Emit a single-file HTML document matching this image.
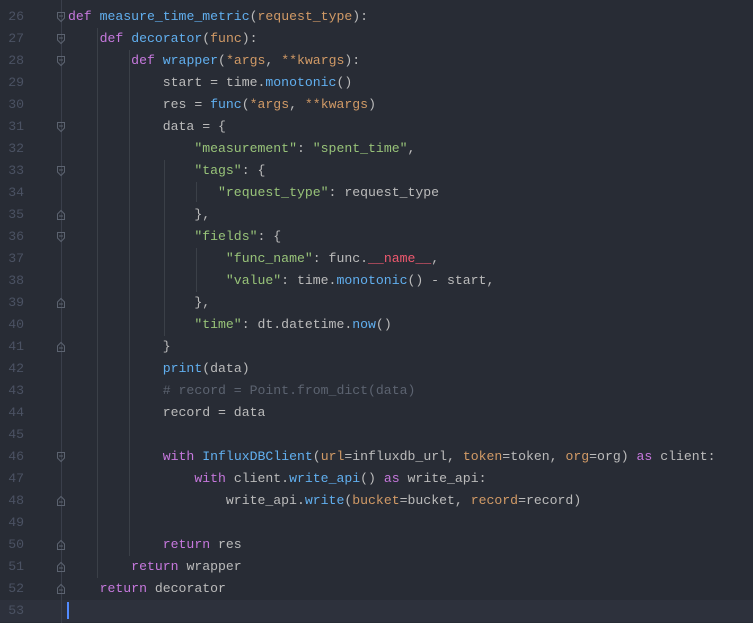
<!DOCTYPE html>
<html><head><meta charset="utf-8"><style>
html,body{margin:0;padding:0;background:#282c35;width:753px;height:623px;overflow:hidden}
.ed{position:relative;width:753px;height:623px;font-family:"Liberation Mono",monospace;font-size:13.17px}
.ln{position:absolute;left:0;width:24px;text-align:right;color:#4b5263;height:22px;line-height:22px}
.cl{position:absolute;left:68px;white-space:pre;color:#bbbbbb;height:22px;line-height:22px}
.k{color:#c678dd}.f{color:#61afef}.p{color:#d19a66}.s{color:#98c379}.c{color:#5c6370}.m{color:#ef596f}
.g{position:absolute;width:1px;background:#3b4048}
.fold{position:absolute;left:56px}
</style></head><body><div class="ed">
<div style="position:absolute;left:0;top:600px;width:753px;height:22px;background:#2d313c"></div>
<div class="g" style="left:61px;top:0;height:623px;background:#3a3f4b"></div>
<div class="g" style="left:97px;top:28px;height:550px"></div>
<div class="g" style="left:129px;top:50px;height:506px"></div>
<div class="g" style="left:164px;top:160px;height:176px"></div>
<div class="g" style="left:196px;top:182px;height:20px"></div>
<div class="g" style="left:196px;top:248px;height:44px"></div>
<div style="position:absolute;left:67px;top:602px;width:2px;height:17px;background:#528bff"></div>
<div id="c"></div>
</div>
<script>
var L=[
'<span class="k">def</span> <span class="f">measure_time_metric</span>(<span class="p">request_type</span>):',
'    <span class="k">def</span> <span class="f">decorator</span>(<span class="p">func</span>):',
'        <span class="k">def</span> <span class="f">wrapper</span>(<span class="p">*args</span>, <span class="p">**kwargs</span>):',
'            start = time.<span class="f">monotonic</span>()',
'            res = <span class="f">func</span>(<span class="p">*args</span>, <span class="p">**kwargs</span>)',
'            data = {',
'                <span class="s">"measurement"</span>: <span class="s">"spent_time"</span>,',
'                <span class="s">"tags"</span>: {',
'                   <span class="s">"request_type"</span>: request_type',
'                },',
'                <span class="s">"fields"</span>: {',
'                    <span class="s">"func_name"</span>: func.<span class="m">__name__</span>,',
'                    <span class="s">"value"</span>: time.<span class="f">monotonic</span>() - start,',
'                },',
'                <span class="s">"time"</span>: dt.datetime.<span class="f">now</span>()',
'            }',
'            <span class="f">print</span>(data)',
'            <span class="c"># record = Point.from_dict(data)</span>',
'            record = data',
'',
'            <span class="k">with</span> <span class="f">InfluxDBClient</span>(<span class="p">url</span>=influxdb_url, <span class="p">token</span>=token, <span class="p">org</span>=org) <span class="k">as</span> client:',
'                <span class="k">with</span> client.<span class="f">write_api</span>() <span class="k">as</span> write_api:',
'                    write_api.<span class="f">write</span>(<span class="p">bucket</span>=bucket, <span class="p">record</span>=record)',
'',
'            <span class="k">return</span> res',
'        <span class="k">return</span> wrapper',
'    <span class="k">return</span> decorator',
''];
var starts={26:1,27:1,28:1,31:1,33:1,36:1,46:1};
var ends={35:1,39:1,41:1,48:1,50:1,51:1,52:1};
var h='';
for(var i=0;i<L.length;i++){var n=26+i,t=6+i*22;
h+='<div class="ln" style="top:'+t+'px">'+n+'</div><div class="cl" style="top:'+t+'px">'+L[i]+'</div>';
if(starts[n])h+='<svg class="fold" style="top:'+(t+5)+'px" width="10" height="12"><path d="M1.5 1.5H8.5V7L5 10.5L1.5 7Z" fill="none" stroke="#5c6370"/><path d="M3 5H7" stroke="#5c6370"/></svg>';
if(ends[n])h+='<svg class="fold" style="top:'+(t+5)+'px" width="10" height="12"><path d="M1.5 10.5H8.5V5L5 1.5L1.5 5Z" fill="none" stroke="#5c6370"/><path d="M3 7H7" stroke="#5c6370"/></svg>';}
document.getElementById('c').innerHTML=h;
</script></body></html>
